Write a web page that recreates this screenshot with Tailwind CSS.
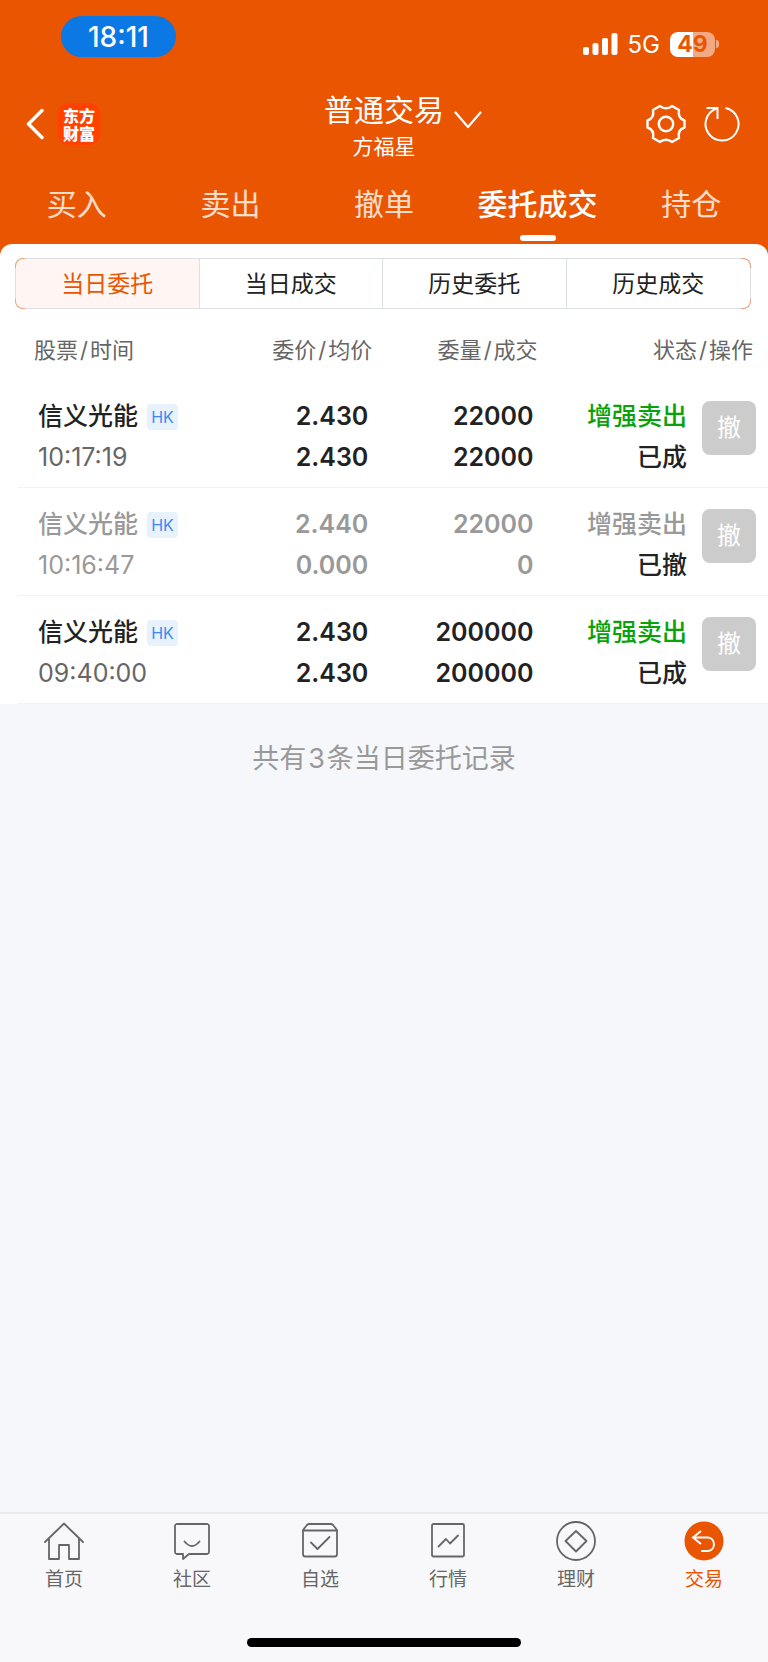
<!DOCTYPE html>
<html lang="zh-CN">
<head>
    <meta charset="UTF-8">
    <meta name="viewport" content="width=device-width, initial-scale=1.0">
    <title>普通交易</title>
    <script src="https://cdn.jsdelivr.net/npm/@tailwindcss/browser@4"></script>
</head>
<body class="flex flex-col min-h-screen bg-[#f6f7fa] text-[#222] font-['Inter','Noto_Sans_CJK_SC',sans-serif]">
    <header class="bg-[#ea5502] text-white">
        <!-- status bar -->
        <div class="flex items-start justify-between h-[84px] pt-4 pl-[61px] pr-[49px]">
            <div class="flex items-center justify-center w-[115px] h-[41px] pt-px rounded-full bg-[#0c78e4] text-[28px] font-medium">18:11</div>
            <div class="flex items-center gap-[10px] h-[56px]">
                <svg class="w-[35px] h-[22px]" viewBox="0 0 35 22" fill="currentColor">
                    <rect x="0" y="14" width="6" height="8" rx="2"/>
                    <rect x="9.5" y="10" width="6" height="12" rx="2"/>
                    <rect x="19" y="5" width="6" height="17" rx="2"/>
                    <rect x="28.5" y="0" width="6" height="22" rx="2"/>
                </svg>
                <span class="pt-px text-2xl">5G</span>
                <div class="flex items-center">
                    <div class="flex items-center justify-center w-[45px] h-[25px] rounded-lg bg-linear-to-r from-white from-50% to-[#f4aa81] to-50% text-[#ea5502] text-[23px] font-bold">49</div>
                    <div class="w-[3px] h-2 ml-px rounded-r-full bg-[#f4aa81]"></div>
                </div>
            </div>
        </div>

        <!-- title bar -->
        <div class="grid grid-cols-3 items-center h-20 pl-[26px] pr-7">
            <div class="flex items-center gap-[14px]">
                <button type="button" aria-label="返回">
                    <svg class="w-[18px] h-[32px]" viewBox="0 0 18 32" fill="none" stroke="currentColor" stroke-width="3.4" stroke-linecap="round" stroke-linejoin="round"><path d="M16 2.5 2.5 16 16 29.5"/></svg>
                </button>
                <a href="#" class="flex items-center justify-center w-[42px] h-[42px] rounded-[10px] bg-[#ff4200] text-base leading-[18px] font-black font-['Noto_Sans_CJK_SC',sans-serif]">东方<br>财富</a>
            </div>
            <button type="button" class="flex items-center justify-center gap-[10px] pl-10">
                <span class="block pt-[5px]">
                    <span class="block text-[30px] leading-10 whitespace-nowrap">普通交易</span>
                    <span class="block text-[21px] leading-[34px]">方福星</span>
                </span>
                <svg class="w-7 h-[18px] mb-2" viewBox="0 0 28 18" fill="none" stroke="currentColor" stroke-width="2.2" stroke-linecap="round" stroke-linejoin="round"><path d="M1.5 1.5 14 16 26.5 1.5"/></svg>
            </button>
            <div class="flex items-center justify-end gap-[18px]">
                <button type="button" aria-label="设置">
                    <svg class="w-10 h-10" viewBox="0 0 40 40" fill="none" stroke="currentColor" stroke-width="2.4" stroke-linejoin="round"><circle cx="20" cy="20" r="7.2"/><path d="M14 2C17 5 23 5 26 2L33 6C32 11 34 15 38.5 16.500V23.500C34 25 32 29 33 34L26 38C23 35 17 35 14 38L7 34C8 29 6 25 1.500 23.500V16.500C6 15 8 11 7 6Z"/></svg>
                </button>
                <button type="button" aria-label="刷新">
                    <svg class="w-9 h-9" viewBox="0 0 36 36" fill="none" stroke="currentColor" stroke-width="2"><path d="M21.500 1.900A16.500 16.500 0 1 1 13.400 2.200"/><path d="M2.500 2H13.500V13"/></svg>
                </button>
            </div>
        </div>

        <!-- main tabs -->
        <nav class="grid grid-cols-5 h-20 text-[30px] leading-[80px] text-center text-white/80">
            <a href="#">买入</a>
            <a href="#">卖出</a>
            <a href="#">撤单</a>
            <a href="#" class="relative font-medium text-white">委托成交
                <span class="absolute bottom-[3px] left-1/2 w-9 h-[6px] -translate-x-1/2 rounded-full bg-white"></span>
            </a>
            <a href="#">持仓</a>
        </nav>
    </header>

    <main class="flex-1 bg-linear-to-b from-[#ea5502] from-[20px] to-transparent to-[20px]">
        <section class="pt-[14px] rounded-t-xl bg-white">
            <div class="relative ml-[15px] mr-[17px]">
                <div class="grid grid-cols-4 h-[51px] border border-[#dcdfe6] rounded-lg overflow-hidden text-[23px] divide-x divide-[#dcdfe6]">
                    <button type="button" class="pt-px bg-[#fff5f2] text-[#ea5502]">当日委托</button>
                    <button type="button" class="pt-px">当日成交</button>
                    <button type="button" class="pt-px">历史委托</button>
                    <button type="button" class="pt-px">历史成交</button>
                </div>
                <!-- tinted corners -->
                <span class="absolute top-0 left-0 size-[10px] border-t border-l border-[#f0a27c] rounded-tl-lg"></span>
                <span class="absolute bottom-0 left-0 size-[10px] border-b border-l border-[#f0a27c] rounded-bl-lg"></span>
                <span class="absolute top-0 right-0 size-[10px] border-t border-r border-[#f0a27c] rounded-tr-lg"></span>
                <span class="absolute bottom-0 right-0 size-[10px] border-b border-r border-[#f0a27c] rounded-br-lg"></span>
            </div>

            <table class="w-full table-fixed">
                <thead class="h-[71px] text-[22px] text-[#666]">
                    <tr>
                        <th class="w-[27%] pt-3 pl-[34px] text-left font-normal">股票<span class="mx-[2px]">/</span>时间</th>
                        <th class="w-[22%] pt-3 pr-1 text-right font-normal">委价<span class="mx-[2px]">/</span>均价</th>
                        <th class="w-[21%] pt-3 text-right font-normal">委量<span class="mx-[2px]">/</span>成交</th>
                        <th class="w-[30%] pt-3 pr-[15px] text-right font-normal">状态<span class="mx-[2px]">/</span>操作</th>
                    </tr>
                </thead>
                <tbody id="orders"></tbody>
            </table>
        </section>
        <p class="pt-9 text-[27px] leading-[38px] text-center text-[#999]">共有<span class="mx-[2px]">3</span>条当日委托记录</p>
    </main>

    <footer class="border-t-2 border-[#ececee] bg-[#f8f8fa]">
        <nav class="grid grid-cols-6 h-[124px] pt-[7px] text-[19px] leading-[30px] text-[#666]">
            <a href="#" class="flex flex-col items-center gap-1">
                <svg class="w-10 h-10" viewBox="0 0 40 40" fill="none" stroke="currentColor" stroke-width="1.8" stroke-linejoin="round" stroke-linecap="round"><path d="M1 21 20 2.500 39 21M5 18V38H15V24H25V38H35V18"/></svg>
                首页
            </a>
            <a href="#" class="flex flex-col items-center gap-1">
                <svg class="w-10 h-10" viewBox="0 0 40 40" fill="none" stroke="currentColor" stroke-width="1.8" stroke-linejoin="round" stroke-linecap="round"><path d="M4.500 3H35.500A2 2 0 0 1 37 5V31A2 2 0 0 1 35.500 33H17L11 38V33H4.500A2 2 0 0 1 3 31V5A2 2 0 0 1 4.500 3Z"/><path d="M12.500 20.500Q20 29.500 27.500 20.500"/></svg>
                社区
            </a>
            <a href="#" class="flex flex-col items-center gap-1">
                <svg class="w-10 h-10" viewBox="0 0 40 40" fill="none" stroke="currentColor" stroke-width="1.8" stroke-linejoin="round" stroke-linecap="round"><path d="M3 9 7 4Q8 3 9 3H31Q32 3 33 4L37 9V33Q37 35.500 35 35.500H5Q3 35.500 3 33ZM3 9.500H37"/><path d="M11 21.500 17.500 28 29.500 16"/></svg>
                自选
            </a>
            <a href="#" class="flex flex-col items-center gap-1">
                <svg class="w-10 h-10" viewBox="0 0 40 40" fill="none" stroke="currentColor" stroke-width="1.8" stroke-linejoin="round" stroke-linecap="round"><rect x="4" y="3" width="32" height="32.5" rx="1.5"/><path d="M10.500 25.500 18 18 22 22.500 30 14.500"/></svg>
                行情
            </a>
            <a href="#" class="flex flex-col items-center gap-1">
                <svg class="w-10 h-10" viewBox="0 0 40 40" fill="none" stroke="currentColor" stroke-width="1.8" stroke-linejoin="round"><circle cx="20" cy="20" r="19"/><path d="M20 10 30.500 20 20 30.500 9.500 20Z"/></svg>
                理财
            </a>
            <a href="#" class="flex flex-col items-center gap-1 text-[#ea5502]">
                <svg class="w-10 h-10" viewBox="0 0 40 40" fill="none" stroke="#fff" stroke-width="2"><circle cx="20" cy="20" r="19.5" fill="#ea5502" stroke="none"/><path d="M17 10 9 16.500 17 23M9.500 16.500H24A6.800 6.800 0 0 1 24 30H17"/></svg>
                交易
            </a>
        </nav>
        <div class="w-[274px] h-[9px] mx-auto mb-[15px] rounded-full bg-black"></div>
    </footer>

    <script>
        const orders = [
            { name: "信义光能", time: "10:17:19", price: "2.430", avg: "2.430", qty: "22000", filled: "22000", side: "增强卖出", status: "已成" },
            { name: "信义光能", time: "10:16:47", price: "2.440", avg: "0.000", qty: "22000", filled: "0", side: "增强卖出", status: "已撤" },
            { name: "信义光能", time: "09:40:00", price: "2.430", avg: "2.430", qty: "200000", filled: "200000", side: "增强卖出", status: "已成" }
        ];

        document.getElementById("orders").innerHTML = orders.map(o => {
            const cancelled = o.status === "已撤";
            const main = cancelled ? "text-[#999]" : "text-[#222]";
            const time = cancelled ? "text-[#999]" : "text-[#666]";
            const side = cancelled ? "text-[#999]" : "text-[#09a209]";
            return `
            <tr class="h-[108px] align-top text-[25px] leading-[41px] font-semibold bg-[linear-gradient(#f1f2f4,#f1f2f4)] bg-size-[100%_1px] bg-position-[18px_100%] bg-no-repeat ${main}">
                <td class="pt-4 pl-[38px]">
                    <div class="flex items-center gap-[9px] font-medium">${o.name}<span class="w-[31px] h-[26px] rounded bg-[#e8f2fd] text-base leading-[26px] text-center font-normal text-[#3f8af2]">HK</span></div>
                    <div class="font-normal ${time}">${o.time}</div>
                </td>
                <td class="pt-4 pr-2 text-right">${o.price}<br>${o.avg}</td>
                <td class="pt-4 pr-1 text-right">${o.qty}<br>${o.filled}</td>
                <td class="pt-4 pr-3">
                    <div class="flex items-start justify-end gap-[15px] font-medium">
                        <div class="text-right"><div class="${side}">${o.side}</div><div class="text-[#222]">${o.status}</div></div>
                        <button type="button" class="w-[54px] h-[54px] mt-[5px] rounded-lg bg-[#ccc] text-2xl font-normal text-white">撤</button>
                    </div>
                </td>
            </tr>`;
        }).join("");
    </script>
</body>
</html>
